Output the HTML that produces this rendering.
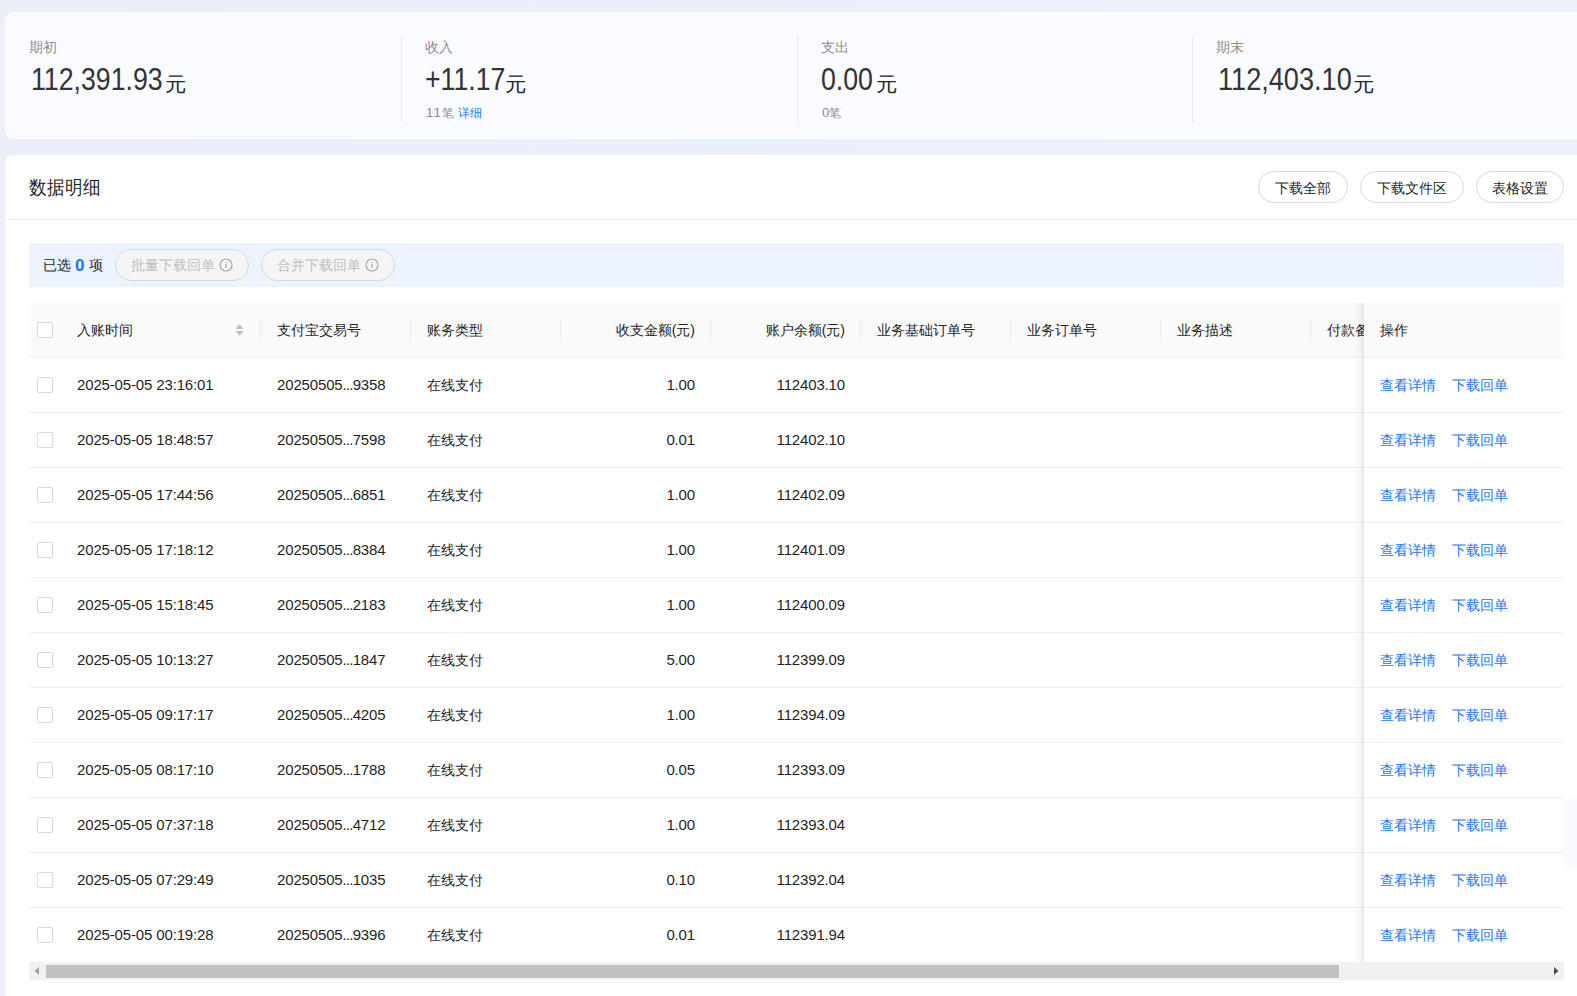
<!DOCTYPE html><html><head><meta charset="utf-8"><style>
*{box-sizing:border-box;margin:0;padding:0}
html,body{width:1577px;height:996px;overflow:hidden}
body{position:relative;font-family:"Liberation Sans",sans-serif;background:linear-gradient(90deg,#eceef9 0%,#eaf0f9 45%,#edf2fa 100%);color:#1f1f1f}
.a{position:absolute;white-space:nowrap}
.card1{position:absolute;left:5px;top:12px;width:1600px;height:127px;background:#fafbff;border-radius:8px}
.card2{position:absolute;left:5px;top:155px;width:1600px;height:900px;background:#fff;border-radius:8px}
.lbl{font-size:13.5px;color:#8c8c8c;line-height:16px}
.num{font-size:31px;color:#333;line-height:34px;transform:scaleX(0.89);transform-origin:0 0}
.yuan{font-size:20px;line-height:24px;color:#262626;transform:scaleX(1.07);transform-origin:0 0}
.sub{font-size:12px;color:#8c8c8c;line-height:16px}
.blue{color:#1677ff}
.vdiv{position:absolute;width:1px;background:#e9e9ec}
.title{font-size:18px;line-height:24px;color:#1f1f1f;transform:scaleY(1.08);transform-origin:0 50%}
.hline{position:absolute;height:1px;background:#efefef}
.btn{position:absolute;height:32px;border:1px solid #d9d9d9;border-radius:16px;background:#fff;font-size:14px;line-height:32px;text-align:center;color:#1f1f1f}
.selbar{position:absolute;left:29px;top:243px;width:1535px;height:44px;background:#ebf3fe}
.pill{position:absolute;height:32px;border:1px solid #d9d9d9;border-radius:16px;background:#f5f5f5;font-size:14px;line-height:30px;color:#bfbfbf;padding-left:15px}
.thead{position:absolute;left:29px;top:303px;width:1535px;height:55px;background:#fafafa;border-bottom:1px solid #f0f0f0}
.th{position:absolute;font-size:14px;line-height:20px;color:#1f1f1f;white-space:nowrap}
.td{position:absolute;font-size:14px;line-height:20px;color:#1f1f1f;white-space:nowrap}
.tn{font-size:15px;letter-spacing:-0.15px}
.cb{position:absolute;width:16px;height:16px;border:1px solid #d9d9d9;border-radius:2px;background:#fff}
.rowline{position:absolute;left:29px;width:1535px;height:1px;background:#f0f0f0}
.coldiv{position:absolute;width:1px;height:22px;top:319px;background:#ebebeb}
.fixed{position:absolute;left:1364px;top:303px;width:200px;height:659px;background:#fff}
.fixedshadow{position:absolute;left:1353px;top:303px;width:11px;height:659px;background:linear-gradient(90deg,rgba(0,0,0,0) 0%,rgba(0,0,0,0.035) 70%,rgba(0,0,0,0.09) 100%)}
.link{color:#1677ff}
</style></head><body>
<div class="card1"></div>
<div class="a lbl" style="left:29px;top:40px">期初</div>
<div class="a num" style="left:31px;top:63px;transform:scaleX(0.861)">112,391.93</div>
<div class="a yuan" style="left:165px;top:72px">元</div>
<div class="a lbl" style="left:425px;top:40px">收入</div>
<div class="a num" style="left:425px;top:63px;transform:scaleX(0.861)">+11.17</div>
<div class="a yuan" style="left:504.5px;top:72px">元</div>
<div class="a sub" style="left:426px;top:105px"><span style="font-size:13px;letter-spacing:1.2px;">11</span>笔<span class="blue" style="margin-left:4px">详细</span></div>
<div class="a lbl" style="left:821px;top:40px">支出</div>
<div class="a num" style="left:821px;top:63px;transform:scaleX(0.861)">0.00</div>
<div class="a yuan" style="left:876px;top:72px">元</div>
<div class="a sub" style="left:822px;top:105px"><span style="font-size:13px;">0</span>笔</div>
<div class="a lbl" style="left:1216px;top:40px">期末</div>
<div class="a num" style="left:1218px;top:63px;transform:scaleX(0.875)">112,403.10</div>
<div class="a yuan" style="left:1353px;top:72px">元</div>
<div class="vdiv" style="left:401px;top:36px;height:87px"></div>
<div class="vdiv" style="left:797px;top:36px;height:87px"></div>
<div class="vdiv" style="left:1192px;top:36px;height:87px"></div>
<div class="card2"></div>
<div class="a title" style="left:29px;top:176px">数据明细</div>
<div class="hline" style="left:5px;top:219px;width:1572px"></div>
<div class="btn" style="left:1258px;top:171px;width:90px">下载全部</div>
<div class="btn" style="left:1360px;top:171px;width:104px">下载文件区</div>
<div class="btn" style="left:1476px;top:171px;width:88px">表格设置</div>
<div class="selbar"></div>
<div class="a" style="left:43px;top:255px;font-size:14px;line-height:20px;color:#1f1f1f">已选 <b class="blue" style="font-size:17px;position:relative;top:1px;margin-right:1px">0</b> 项</div>
<div class="pill" style="left:115px;top:249px;width:134px">批量下载回单<svg width="14" height="14" viewBox="0 0 14 14" style="position:absolute;right:15px;top:8px"><circle cx="7" cy="7" r="6" fill="none" stroke="#a8a8a8" stroke-width="1.2"/><rect x="6.4" y="6" width="1.2" height="4.2" fill="#a8a8a8"/><rect x="6.4" y="3.6" width="1.2" height="1.3" fill="#a8a8a8"/></svg></div>
<div class="pill" style="left:261px;top:249px;width:134px">合并下载回单<svg width="14" height="14" viewBox="0 0 14 14" style="position:absolute;right:15px;top:8px"><circle cx="7" cy="7" r="6" fill="none" stroke="#a8a8a8" stroke-width="1.2"/><rect x="6.4" y="6" width="1.2" height="4.2" fill="#a8a8a8"/><rect x="6.4" y="3.6" width="1.2" height="1.3" fill="#a8a8a8"/></svg></div>
<div class="thead"></div>
<div class="cb" style="left:37px;top:322px"></div>
<div class="th" style="left:77px;top:320px">入账时间</div>
<div class="th" style="left:277px;top:320px">支付宝交易号</div>
<div class="th" style="left:427px;top:320px">账务类型</div>
<div class="th" style="right:882px;top:320px">收支金额(元)</div>
<div class="th" style="right:732px;top:320px">账户余额(元)</div>
<div class="th" style="left:877px;top:320px">业务基础订单号</div>
<div class="th" style="left:1027px;top:320px">业务订单号</div>
<div class="th" style="left:1177px;top:320px">业务描述</div>
<div class="th" style="left:1327px;top:320px">付款备注</div>
<svg class="a" style="left:234.5px;top:324px" width="9" height="12" viewBox="0 0 9 12"><path d="M4.5 0.3 L8.5 5 L0.5 5 Z" fill="#bfbfbf"/><path d="M4.5 11.7 L8.5 7 L0.5 7 Z" fill="#bfbfbf"/></svg>
<div class="coldiv" style="left:260px"></div>
<div class="coldiv" style="left:410px"></div>
<div class="coldiv" style="left:560px"></div>
<div class="coldiv" style="left:710px"></div>
<div class="coldiv" style="left:860px"></div>
<div class="coldiv" style="left:1010px"></div>
<div class="coldiv" style="left:1160px"></div>
<div class="coldiv" style="left:1310px"></div>
<div class="cb" style="left:37px;top:377px"></div>
<div class="td tn" style="left:77px;top:375px">2025-05-05 23:16:01</div>
<div class="td tn" style="left:277px;top:375px">20250505<span style="letter-spacing:-0.8px">...</span>9358</div>
<div class="td" style="left:427px;top:375px">在线支付</div>
<div class="td tn" style="right:882px;top:375px">1.00</div>
<div class="td tn" style="right:732px;top:375px">112403.10</div>
<div class="rowline" style="top:412px"></div>
<div class="cb" style="left:37px;top:432px"></div>
<div class="td tn" style="left:77px;top:430px">2025-05-05 18:48:57</div>
<div class="td tn" style="left:277px;top:430px">20250505<span style="letter-spacing:-0.8px">...</span>7598</div>
<div class="td" style="left:427px;top:430px">在线支付</div>
<div class="td tn" style="right:882px;top:430px">0.01</div>
<div class="td tn" style="right:732px;top:430px">112402.10</div>
<div class="rowline" style="top:467px"></div>
<div class="cb" style="left:37px;top:487px"></div>
<div class="td tn" style="left:77px;top:485px">2025-05-05 17:44:56</div>
<div class="td tn" style="left:277px;top:485px">20250505<span style="letter-spacing:-0.8px">...</span>6851</div>
<div class="td" style="left:427px;top:485px">在线支付</div>
<div class="td tn" style="right:882px;top:485px">1.00</div>
<div class="td tn" style="right:732px;top:485px">112402.09</div>
<div class="rowline" style="top:522px"></div>
<div class="cb" style="left:37px;top:542px"></div>
<div class="td tn" style="left:77px;top:540px">2025-05-05 17:18:12</div>
<div class="td tn" style="left:277px;top:540px">20250505<span style="letter-spacing:-0.8px">...</span>8384</div>
<div class="td" style="left:427px;top:540px">在线支付</div>
<div class="td tn" style="right:882px;top:540px">1.00</div>
<div class="td tn" style="right:732px;top:540px">112401.09</div>
<div class="rowline" style="top:577px"></div>
<div class="cb" style="left:37px;top:597px"></div>
<div class="td tn" style="left:77px;top:595px">2025-05-05 15:18:45</div>
<div class="td tn" style="left:277px;top:595px">20250505<span style="letter-spacing:-0.8px">...</span>2183</div>
<div class="td" style="left:427px;top:595px">在线支付</div>
<div class="td tn" style="right:882px;top:595px">1.00</div>
<div class="td tn" style="right:732px;top:595px">112400.09</div>
<div class="rowline" style="top:632px"></div>
<div class="cb" style="left:37px;top:652px"></div>
<div class="td tn" style="left:77px;top:650px">2025-05-05 10:13:27</div>
<div class="td tn" style="left:277px;top:650px">20250505<span style="letter-spacing:-0.8px">...</span>1847</div>
<div class="td" style="left:427px;top:650px">在线支付</div>
<div class="td tn" style="right:882px;top:650px">5.00</div>
<div class="td tn" style="right:732px;top:650px">112399.09</div>
<div class="rowline" style="top:687px"></div>
<div class="cb" style="left:37px;top:707px"></div>
<div class="td tn" style="left:77px;top:705px">2025-05-05 09:17:17</div>
<div class="td tn" style="left:277px;top:705px">20250505<span style="letter-spacing:-0.8px">...</span>4205</div>
<div class="td" style="left:427px;top:705px">在线支付</div>
<div class="td tn" style="right:882px;top:705px">1.00</div>
<div class="td tn" style="right:732px;top:705px">112394.09</div>
<div class="rowline" style="top:742px"></div>
<div class="cb" style="left:37px;top:762px"></div>
<div class="td tn" style="left:77px;top:760px">2025-05-05 08:17:10</div>
<div class="td tn" style="left:277px;top:760px">20250505<span style="letter-spacing:-0.8px">...</span>1788</div>
<div class="td" style="left:427px;top:760px">在线支付</div>
<div class="td tn" style="right:882px;top:760px">0.05</div>
<div class="td tn" style="right:732px;top:760px">112393.09</div>
<div class="rowline" style="top:797px"></div>
<div class="cb" style="left:37px;top:817px"></div>
<div class="td tn" style="left:77px;top:815px">2025-05-05 07:37:18</div>
<div class="td tn" style="left:277px;top:815px">20250505<span style="letter-spacing:-0.8px">...</span>4712</div>
<div class="td" style="left:427px;top:815px">在线支付</div>
<div class="td tn" style="right:882px;top:815px">1.00</div>
<div class="td tn" style="right:732px;top:815px">112393.04</div>
<div class="rowline" style="top:852px"></div>
<div class="cb" style="left:37px;top:872px"></div>
<div class="td tn" style="left:77px;top:870px">2025-05-05 07:29:49</div>
<div class="td tn" style="left:277px;top:870px">20250505<span style="letter-spacing:-0.8px">...</span>1035</div>
<div class="td" style="left:427px;top:870px">在线支付</div>
<div class="td tn" style="right:882px;top:870px">0.10</div>
<div class="td tn" style="right:732px;top:870px">112392.04</div>
<div class="rowline" style="top:907px"></div>
<div class="cb" style="left:37px;top:927px"></div>
<div class="td tn" style="left:77px;top:925px">2025-05-05 00:19:28</div>
<div class="td tn" style="left:277px;top:925px">20250505<span style="letter-spacing:-0.8px">...</span>9396</div>
<div class="td" style="left:427px;top:925px">在线支付</div>
<div class="td tn" style="right:882px;top:925px">0.01</div>
<div class="td tn" style="right:732px;top:925px">112391.94</div>
<div class="fixedshadow"></div>
<div class="fixed"></div>
<div class="a" style="left:1364px;top:303px;width:200px;height:55px;background:#fafafa;border-bottom:1px solid #f0f0f0"></div>
<div class="th" style="left:1380px;top:320px">操作</div>
<div class="td link" style="left:1380px;top:375px">查看详情</div>
<div class="td link" style="left:1452px;top:375px">下载回单</div>
<div class="a" style="left:1364px;top:412px;width:200px;height:1px;background:#f0f0f0"></div>
<div class="td link" style="left:1380px;top:430px">查看详情</div>
<div class="td link" style="left:1452px;top:430px">下载回单</div>
<div class="a" style="left:1364px;top:467px;width:200px;height:1px;background:#f0f0f0"></div>
<div class="td link" style="left:1380px;top:485px">查看详情</div>
<div class="td link" style="left:1452px;top:485px">下载回单</div>
<div class="a" style="left:1364px;top:522px;width:200px;height:1px;background:#f0f0f0"></div>
<div class="td link" style="left:1380px;top:540px">查看详情</div>
<div class="td link" style="left:1452px;top:540px">下载回单</div>
<div class="a" style="left:1364px;top:577px;width:200px;height:1px;background:#f0f0f0"></div>
<div class="td link" style="left:1380px;top:595px">查看详情</div>
<div class="td link" style="left:1452px;top:595px">下载回单</div>
<div class="a" style="left:1364px;top:632px;width:200px;height:1px;background:#f0f0f0"></div>
<div class="td link" style="left:1380px;top:650px">查看详情</div>
<div class="td link" style="left:1452px;top:650px">下载回单</div>
<div class="a" style="left:1364px;top:687px;width:200px;height:1px;background:#f0f0f0"></div>
<div class="td link" style="left:1380px;top:705px">查看详情</div>
<div class="td link" style="left:1452px;top:705px">下载回单</div>
<div class="a" style="left:1364px;top:742px;width:200px;height:1px;background:#f0f0f0"></div>
<div class="td link" style="left:1380px;top:760px">查看详情</div>
<div class="td link" style="left:1452px;top:760px">下载回单</div>
<div class="a" style="left:1364px;top:797px;width:200px;height:1px;background:#f0f0f0"></div>
<div class="td link" style="left:1380px;top:815px">查看详情</div>
<div class="td link" style="left:1452px;top:815px">下载回单</div>
<div class="a" style="left:1364px;top:852px;width:200px;height:1px;background:#f0f0f0"></div>
<div class="td link" style="left:1380px;top:870px">查看详情</div>
<div class="td link" style="left:1452px;top:870px">下载回单</div>
<div class="a" style="left:1364px;top:907px;width:200px;height:1px;background:#f0f0f0"></div>
<div class="td link" style="left:1380px;top:925px">查看详情</div>
<div class="td link" style="left:1452px;top:925px">下载回单</div>
<div class="a" style="left:29px;top:962px;width:1535px;height:18px;background:#f1f1f1"></div>
<div class="a" style="left:46px;top:965px;width:1293px;height:13px;background:#c1c1c1"></div>
<svg class="a" style="left:33px;top:966px" width="8" height="10" viewBox="0 0 8 10"><path d="M6 1 L6 9 L1.5 5 Z" fill="#a3a3a3"/></svg>
<svg class="a" style="left:1552px;top:966px" width="8" height="10" viewBox="0 0 8 10"><path d="M2 1 L2 9 L6.5 5 Z" fill="#505050"/></svg>
<div class="a" style="left:1564px;top:798px;width:40px;height:69px;background:#f9fafd;border-radius:8px;box-shadow:0 0 6px rgba(0,0,0,0.04)"></div>
</body></html>
